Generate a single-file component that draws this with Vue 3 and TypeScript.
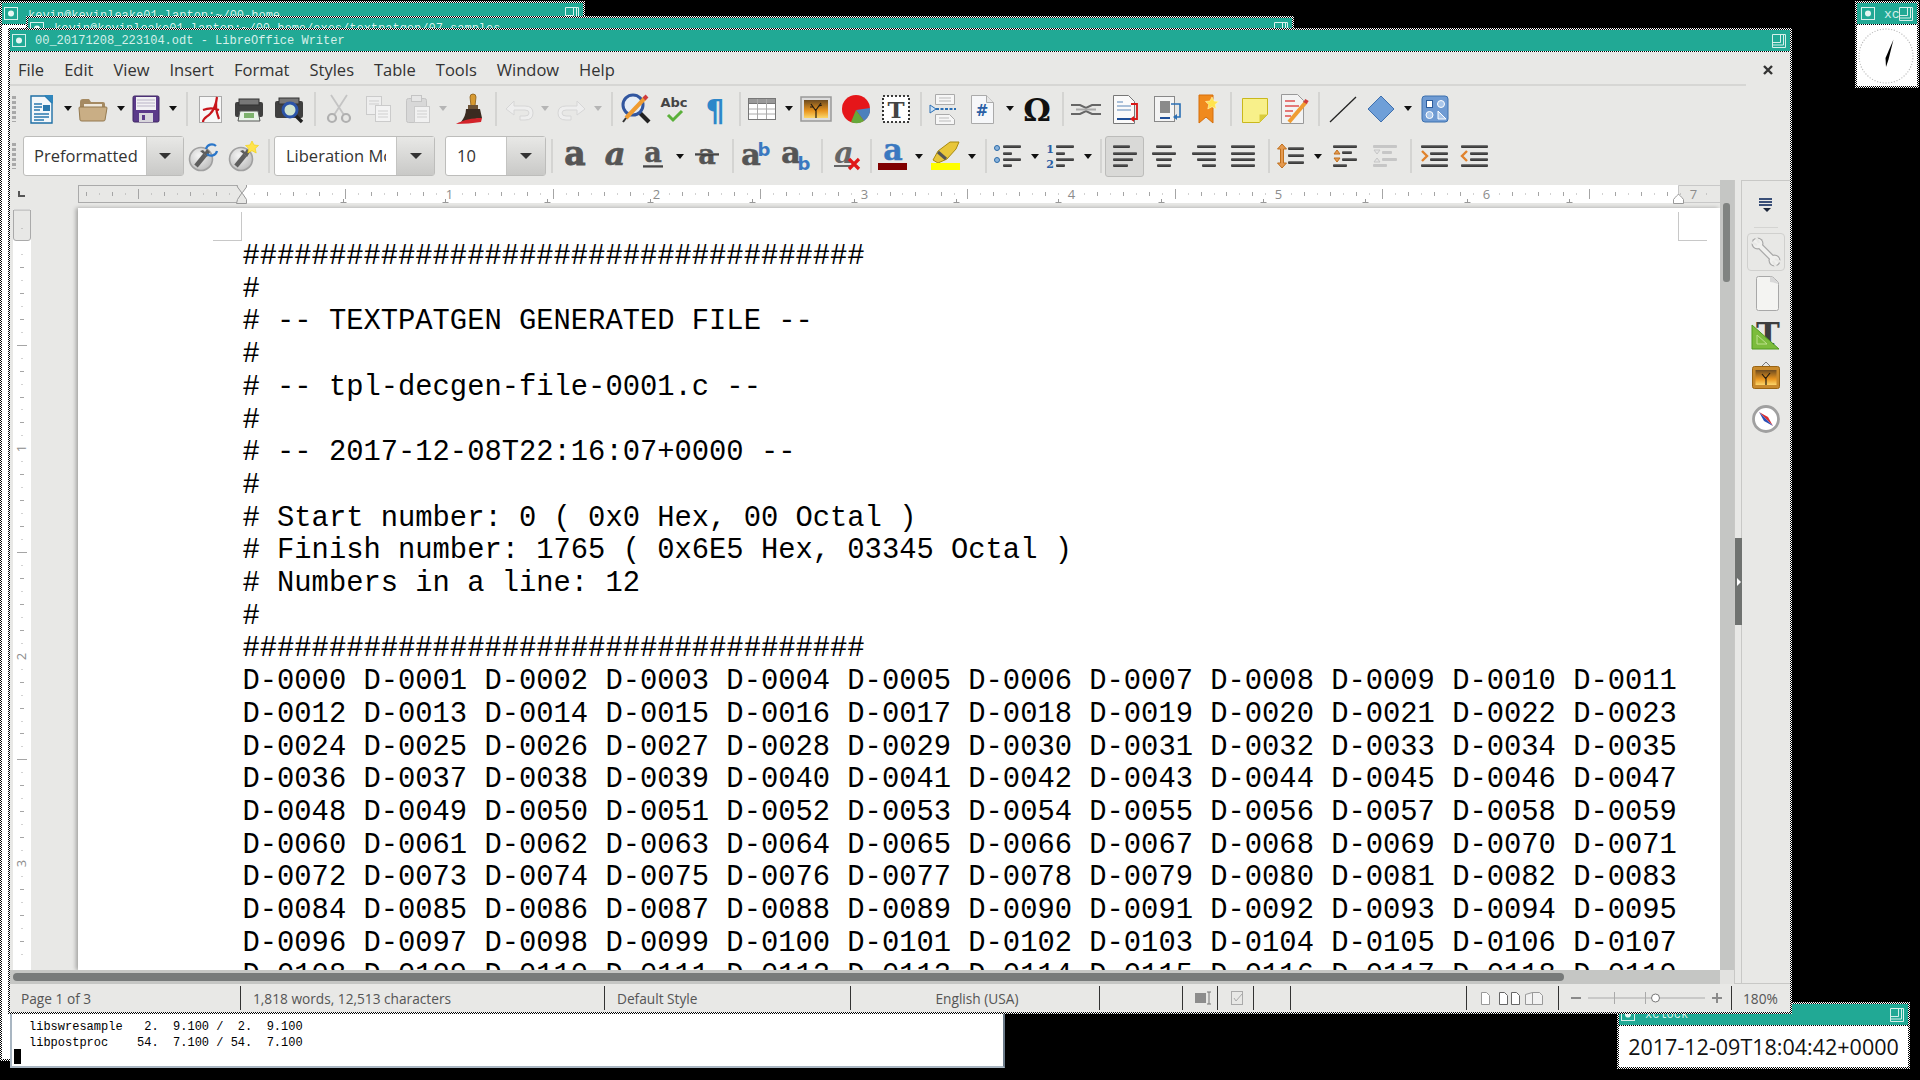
<template>
  <div class="desk">
    <svg class="defs" width="0" height="0">
      <defs>
        <linearGradient id="bar" x1="0" y1="0" x2="0" y2="1"><stop offset="0" stop-color="#8a8a8a" /><stop offset="0.5" stop-color="#4a4a4a" /><stop offset="1" stop-color="#333" /></linearGradient>
        <linearGradient id="sun" x1="0" y1="0" x2="0" y2="1"><stop offset="0" stop-color="#6b4a20" /><stop offset="0.6" stop-color="#e8941e" /><stop offset="1" stop-color="#fbd66a" /></linearGradient>
        <radialGradient id="disc" cx="0.4" cy="0.35" r="0.8"><stop offset="0" stop-color="#f4f4f4" /><stop offset="1" stop-color="#b4b4b4" /></radialGradient>
        <symbol id="ti" viewBox="0 0 14 13"><rect x="0.5" y="0.5" width="13" height="12" fill="none" stroke="#d6f0ea" /><circle cx="7" cy="6.5" r="3" fill="#e6f6f2" /></symbol>
        <symbol id="tm" viewBox="0 0 14 14"><path d="M0.5 0.5h13v13h-13zM8.5 0.5v8h-8M0.5 11h11V0.5" fill="none" stroke="#d6f0ea" /></symbol>
        <symbol id="new" viewBox="0 0 36 36"><path d="M8 5h14l7 7v20H8z" fill="#f3f7fa" stroke="#1f6fa5" stroke-width="1.4" /><path d="M21 4h9v9z" fill="#2f86bd" /><path d="M11 13h8M11 16h8M11 19h6M11 23h15M11 26h15M11 29h10" stroke="#2a78ad" stroke-width="1.3" /><rect x="20" y="14" width="7" height="6" fill="#2a78ad" /></symbol>
        <symbol id="open" viewBox="0 0 36 36"><path d="M5 11q0-3 3-3h6l2 3h12q2 0 2 2v3H5z" fill="#a58a62" /><path d="M9 13h18v6H9z" fill="#efe9dd" /><path d="M4 17q0-1 1-1h26q1 0 1 1l-2 12q0 1-2 1H7q-2 0-2-1z" fill="#c9ae85" stroke="#94794f" /></symbol>
        <symbol id="save" viewBox="0 0 36 36"><rect x="5" y="5" width="26" height="26" rx="1.5" fill="#5b3a8a" stroke="#3f2663" /><rect x="8" y="6" width="20" height="13" fill="#f1f0f3" /><path d="M9 9h18M9 12h18M9 15h18" stroke="#b9b3c6" /><rect x="11" y="22" width="14" height="9" fill="#d8d6dc" /><rect x="14" y="24" width="3" height="5" fill="#5b3a8a" /></symbol>
        <symbol id="pdf" viewBox="0 0 36 36"><rect x="7.5" y="5.5" width="22" height="26" fill="#f7f7f7" stroke="#aaa" /><path d="M25 6c-1 8-3 13-7 17-3 3-7 4-7 8M25 6c-2 9-1 14 2 22M11 19c5-2 11-2 16 0" stroke="#c8141a" stroke-width="2.2" fill="none" /></symbol>
        <symbol id="print" viewBox="0 0 36 36"><path d="M6 11h24q2 0 2 2v11q0 2-2 2H6q-2 0-2-2V13q0-2 2-2z" fill="#3f3f3f" /><rect x="8" y="8" width="20" height="6" fill="#777" stroke="#333" /><path d="M9 20h18l2 10H7z" fill="#e8f3e8" stroke="#555" /><rect x="13" y="22" width="10" height="5" fill="#7cb36c" /></symbol>
        <symbol id="prev" viewBox="0 0 36 36"><path d="M6 10h24q2 0 2 2v13q0 2-2 2H6q-2 0-2-2V12q0-2 2-2z" fill="#3f3f3f" /><rect x="8" y="7" width="20" height="6" fill="#777" stroke="#333" /><path d="M24 24l7 7" stroke="#222" stroke-width="3.4" /><circle cx="19" cy="19" r="7" fill="#cfe3d0" stroke="#2b54a8" stroke-width="3" /></symbol>
        <symbol id="cut" viewBox="0 0 36 36"><path d="M10 4l13 20M26 4L13 24" stroke="#c4c4c4" stroke-width="1.8" /><circle cx="11" cy="27" r="4" fill="none" stroke="#b0b0b0" stroke-width="2.2" /><circle cx="25" cy="27" r="4" fill="none" stroke="#b0b0b0" stroke-width="2.2" /></symbol>
        <symbol id="copy" viewBox="0 0 36 36"><rect x="6.500" y="5.500" width="15" height="18" fill="#eee" stroke="#cbcbcb" /><rect x="15.500" y="14.500" width="15" height="16" fill="#f3f3f3" stroke="#cbcbcb" /><path d="M9 10h10M9 13h10M18 20h10M18 23h10M18 26h10" stroke="#cfcfcf" /></symbol>
        <symbol id="paste" viewBox="0 0 36 36"><rect x="7.500" y="7.500" width="20" height="24" rx="2" fill="#d8d8d8" stroke="#c4c4c4" /><rect x="12.500" y="4.500" width="10" height="6" fill="#e6e6e6" stroke="#c4c4c4" /><rect x="15.500" y="15.500" width="15" height="16" fill="#f1f1f1" stroke="#cbcbcb" /><path d="M18 20h10M18 23h10M18 26h10" stroke="#cfcfcf" /></symbol>
        <symbol id="brush" viewBox="0 0 36 36"><path d="M20 3q3 0 3 3l-1 9h-4l-1-9q0-3 3-3z" fill="#d79a32" stroke="#8a5c14" stroke-width="0.8" /><rect x="15" y="14" width="10" height="4" fill="#6b5236" /><path d="M13 18h14l2 9c-7 1-14 2-21 4 3-4 5-8 5-13z" fill="#3a2a20" /><path d="M3 33c7-4 16-6 26-6l-1 4c-8 1-17 2-25 2z" fill="#d3232a" /></symbol>
        <symbol id="undo" viewBox="0 0 36 36"><path d="M4 18l8-8v5h11q8 0 8 7t-8 7h-5v-4h5q4 0 4-3t-4-3H12v5z" fill="#eee" stroke="#d6d6d6" /></symbol>
        <symbol id="redo" viewBox="0 0 36 36"><path transform="matrix(-1 0 0 1 36 0)" d="M4 18l8-8v5h11q8 0 8 7t-8 7h-5v-4h5q4 0 4-3t-4-3H12v5z" fill="#eee" stroke="#d6d6d6" /></symbol>
        <symbol id="find" viewBox="0 0 36 36"><path d="M23 22l9 9" stroke="#222" stroke-width="4.2" /><circle cx="16" cy="14" r="10" fill="#e6edf6" stroke="#31569f" stroke-width="3" /><path d="M9 27L28 7" stroke="#ef9c32" stroke-width="4" /><path d="M27 8l3-3" stroke="#d03c3c" stroke-width="4" /><path d="M9 27l-3 4" stroke="#333" stroke-width="2" /></symbol>
        <symbol id="abc" viewBox="0 0 36 36"><text x="18" y="16" text-anchor="middle" font-family="DejaVu Sans" font-weight="700" font-size="13" fill="#444">Abc</text><path d="M12 24l5 5 9-9" stroke="#5ab03a" stroke-width="3" fill="none" /></symbol>
        <symbol id="pil" viewBox="0 0 36 36"><text x="18" y="30" text-anchor="middle" font-family="DejaVu Sans" font-weight="700" font-size="30" fill="#2d87c9">¶</text></symbol>
        <symbol id="table" viewBox="0 0 36 36"><rect x="4.500" y="7.500" width="27" height="21" fill="#fff" stroke="#777" /><rect x="4.500" y="7.500" width="27" height="5" fill="#999" stroke="#777" /><path d="M13.500 8v20M22.500 8v20M5 18h26M5 23h26" stroke="#aaa" /></symbol>
        <symbol id="image" viewBox="0 0 36 36"><rect x="3" y="6" width="30" height="24" fill="#ddd" stroke="#999" stroke-width="1.500" /><rect x="6" y="9" width="24" height="18" fill="url(#sun)" /><path d="M18 27v-9M18 20l-5-7M18 19l5-7M15 16l-3 0M21 15l3-1" stroke="#221a10" stroke-width="1.200" fill="none" /></symbol>
        <symbol id="chart" viewBox="0 0 36 36"><circle cx="18" cy="18" r="14" fill="#e5161a" /><path d="M18 19L32 17A14 14 0 0 1 26 30z" fill="#4c80bd" /><path d="M18 19L26 30A14 14 0 0 1 13 31z" fill="#66a83a" /></symbol>
        <symbol id="tbox" viewBox="0 0 36 36"><rect x="5" y="5" width="26" height="26" fill="#fff" stroke="#000" stroke-width="1.600" stroke-dasharray="2 2" /><text x="18" y="27" text-anchor="middle" font-family="DejaVu Serif" font-weight="700" font-size="23" fill="#444">T</text></symbol>
        <symbol id="brk" viewBox="0 0 36 36"><path d="M9.500 3.500h19v10h-19z" fill="#f6f6f6" stroke="#aaa" /><path d="M13 7h12M13 10h12" stroke="#bbb" /><path d="M10 18h20" stroke="#2a6fb5" stroke-width="2" stroke-dasharray="3 1.500" /><path d="M4 14v8l6-4z" fill="#cfe3f5" stroke="#2a6fb5" /><path d="M9.500 23.500h14l5 5v5h-19z" fill="#f6f6f6" stroke="#aaa" /><path d="M13 27h10M13 30h12" stroke="#bbb" /></symbol>
        <symbol id="field" viewBox="0 0 36 36"><path d="M7.500 4.500h15l7 7v21h-22z" fill="#f6f7f9" stroke="#aaa" /><path d="M22.500 4.500v7h7" fill="#e6e6e6" stroke="#aaa" /><text x="18" y="25" text-anchor="middle" font-family="DejaVu Sans" font-weight="700" font-size="15" fill="#2a5fa5">#</text></symbol>
        <symbol id="omega" viewBox="0 0 36 36"><text x="18" y="30" text-anchor="middle" font-family="DejaVu Serif" font-weight="700" font-size="31" fill="#111">Ω</text></symbol>
        <symbol id="link" viewBox="0 0 36 36"><path d="M3 14h9l6 3 6-3h9M3 23h9l6-3 6 3h9" stroke="#666" stroke-width="2" fill="none" /><path d="M8 18.500h20" stroke="#aaa" stroke-width="2" /></symbol>
        <symbol id="foot" viewBox="0 0 36 36"><path d="M7.500 4.500h15l6 6v22h-21z" fill="#fafafa" stroke="#777" /><path d="M11 11h6M11 15h14M11 19h14" stroke="#5a86b8" /><path d="M11 28h14" stroke="#1f4f98" stroke-width="2" /><path d="M25 13h6v15h-4" stroke="#d81818" stroke-width="1.800" fill="none" /><path d="M28 25v6l-4-3z" fill="#d81818" /></symbol>
        <symbol id="end" viewBox="0 0 36 36"><rect x="6.500" y="5.500" width="20" height="25" fill="#f4f4f4" stroke="#888" /><rect x="12" y="10" width="10" height="12" fill="#8a8a8a" /><path d="M12 27h10" stroke="#1f4f98" stroke-width="2" /><path d="M23 13h9v13h-4" stroke="#2a6fb5" stroke-width="1.600" fill="none" /><path d="M29 23v6l-4-3z" fill="#2a6fb5" /></symbol>
        <symbol id="bmk" viewBox="0 0 36 36"><path d="M10 4h14v28l-7-6-7 6z" fill="#f08a1d" stroke="#d56f0d" /><path d="M23 6l2 4 4.500.500-3.300 3 1 4.500-4.200-2.300-4.200 2.300 1-4.500-3.300-3 4.500-.500z" fill="#ffe34d" stroke="#fff6c0" stroke-width="0.600" /></symbol>
        <symbol id="note" viewBox="0 0 36 36"><path d="M6.500 7.500h25v16l-8 8h-17z" fill="#f8f08a" stroke="#c9b81c" /><path d="M31.500 23.500h-8v8z" fill="#d9cb3c" /></symbol>
        <symbol id="track" viewBox="0 0 36 36"><path d="M6.500 3.500h16l6 6v23h-22z" fill="#f3f3f3" stroke="#999" /><path d="M10 10h10M10 15h14M10 20h8M10 25h6" stroke="#e05050" stroke-width="1.400" /><path d="M14 31L31 11" stroke="#ef9c32" stroke-width="4" /><path d="M30 12l2-3" stroke="#d03c3c" stroke-width="4" /></symbol>
        <symbol id="line" viewBox="0 0 36 36"><path d="M5 31L31 6" stroke="#222" stroke-width="1.300" /></symbol>
        <symbol id="diamond" viewBox="0 0 36 36"><path d="M18 5L31 18 18 31 5 18z" fill="#6f9fd8" stroke="#3f70ae" /></symbol>
        <symbol id="shapes" viewBox="0 0 36 36"><rect x="5" y="5" width="26" height="26" rx="3" fill="#6f9bd3" stroke="#3d70ae" /><rect x="9.500" y="9.500" width="6" height="7" fill="#fff" stroke="#2c5c9c" /><circle cx="24" cy="13" r="3.500" fill="#a9c6ea" stroke="#fff" /><ellipse cx="12.500" cy="24" rx="3.500" ry="3.500" fill="#a9c6ea" stroke="#fff" /><path d="M21 20v8h8z" fill="#a9c6ea" stroke="#fff" /></symbol>
        <symbol id="stya" viewBox="0 0 36 36"><circle cx="15" cy="21" r="11.500" fill="url(#disc)" stroke="#a0a0a0" stroke-width="1.600" /><path d="M10 28l9-11" stroke="#5e5e5e" stroke-width="4.500" /><path d="M14 13l7 6 3-5-3-3-2 3-2-2z" fill="#5e5e5e" /><path d="M20 11a6 6 0 0 1 10-3M31 13a6 6 0 0 1-10 3" stroke="#2a76c9" stroke-width="2.200" fill="none" /></symbol>
        <symbol id="styb" viewBox="0 0 36 36"><circle cx="15" cy="21" r="11.500" fill="url(#disc)" stroke="#a0a0a0" stroke-width="1.600" /><path d="M10 28l9-11" stroke="#5e5e5e" stroke-width="4.500" /><path d="M14 13l7 6 3-5-3-3-2 3-2-2z" fill="#5e5e5e" /><path d="M26 3l2 4 4.500.500-3.300 3 1 4.500-4.200-2.300-4.200 2.300 1-4.500-3.300-3 4.500-.500z" fill="#ffe34d" stroke="#f4d000" stroke-width="0.600" /></symbol>
        <symbol id="bold" viewBox="0 0 36 36"><text x="18" y="27" text-anchor="middle" font-family="DejaVu Serif" font-weight="700" font-size="33" fill="#555" stroke="#555" stroke-width="0.900">a</text></symbol>
        <symbol id="ital" viewBox="0 0 36 36"><text x="18" y="27" text-anchor="middle" font-family="DejaVu Serif" font-weight="700" font-style="italic" font-size="32" fill="#555" stroke="#555" stroke-width="0.700">a</text></symbol>
        <symbol id="undl" viewBox="0 0 36 36"><text x="18" y="24" text-anchor="middle" font-family="DejaVu Serif" font-weight="700" font-size="27" fill="#555" stroke="#555" stroke-width="0.500">a</text><rect x="8" y="27" width="20" height="2.500" fill="url(#bar)" /></symbol>
        <symbol id="strk" viewBox="0 0 36 36"><text x="18" y="26" text-anchor="middle" font-family="DejaVu Serif" font-weight="700" font-size="27" fill="#555" stroke="#555" stroke-width="0.500">a</text><rect x="6" y="15" width="24" height="2.500" fill="url(#bar)" /></symbol>
        <symbol id="sup" viewBox="0 0 36 36"><text x="14" y="27" text-anchor="middle" font-family="DejaVu Serif" font-weight="700" font-size="30" fill="#555" stroke="#555" stroke-width="0.700">a</text><text x="27" y="18" text-anchor="middle" font-family="DejaVu Sans" font-weight="700" font-size="18" fill="#3a78c0">b</text></symbol>
        <symbol id="sub" viewBox="0 0 36 36"><text x="14" y="25" text-anchor="middle" font-family="DejaVu Serif" font-weight="700" font-size="30" fill="#555" stroke="#555" stroke-width="0.700">a</text><text x="27" y="32" text-anchor="middle" font-family="DejaVu Sans" font-weight="700" font-size="18" fill="#3a78c0">b</text></symbol>
        <symbol id="clr" viewBox="0 0 36 36"><text x="15" y="25" text-anchor="middle" font-family="DejaVu Serif" font-weight="700" font-style="italic" font-size="30" fill="#666">a</text><rect x="5" y="27" width="18" height="2" fill="#666" /><path d="M20 21l10 10M30 21L20 31" stroke="#e01818" stroke-width="3.200" /></symbol>
        <symbol id="fcol" viewBox="0 0 36 36"><text x="18" y="22" text-anchor="middle" font-family="DejaVu Serif" font-weight="700" font-size="30" fill="#3a78c0" stroke="#3a78c0" stroke-width="0.500">a</text><rect x="3" y="25" width="29" height="7" fill="#800000" /></symbol>
        <symbol id="hlit" viewBox="0 0 36 36"><path d="M5 22l5-9L22 4h9l-3 7-9 10-9 4z" fill="#e8c63a" stroke="#a88a10" /><path d="M10 14l8 7" stroke="#555" stroke-width="3" /><rect x="3" y="25" width="29" height="7" fill="#ffff00" /></symbol>
        <symbol id="bul" viewBox="0 0 36 36"><circle cx="8" cy="10" r="2.500" fill="#8ab3dc" stroke="#2a6aa8" /><circle cx="8" cy="22" r="2.500" fill="#8ab3dc" stroke="#2a6aa8" /><rect x="14" y="7" width="18" height="3" rx="1" fill="url(#bar)" /><rect x="14" y="14" width="9" height="3" rx="1" fill="url(#bar)" /><rect x="14" y="20" width="18" height="3" rx="1" fill="url(#bar)" /><rect x="14" y="26" width="9" height="3" rx="1" fill="url(#bar)" /></symbol>
        <symbol id="num" viewBox="0 0 36 36"><text x="8" y="15" text-anchor="middle" font-family="DejaVu Serif" font-weight="700" font-size="11" fill="#2a5fa5">1</text><text x="8" y="30" text-anchor="middle" font-family="DejaVu Serif" font-weight="700" font-size="11" fill="#2a5fa5">2</text><rect x="14" y="7" width="18" height="3" rx="1" fill="url(#bar)" /><rect x="14" y="14" width="9" height="3" rx="1" fill="url(#bar)" /><rect x="14" y="20" width="18" height="3" rx="1" fill="url(#bar)" /><rect x="14" y="26" width="9" height="3" rx="1" fill="url(#bar)" /></symbol>
        <symbol id="alnl" viewBox="0 0 36 36"><rect x="6" y="7" width="17" height="3" rx="1" fill="url(#bar)" /><rect x="6" y="14" width="24" height="3" rx="1" fill="url(#bar)" /><rect x="6" y="20" width="20" height="3" rx="1" fill="url(#bar)" /><rect x="6" y="26" width="15" height="3" rx="1" fill="url(#bar)" /></symbol>
        <symbol id="alnc" viewBox="0 0 36 36"><rect x="10" y="7" width="16" height="3" rx="1" fill="url(#bar)" /><rect x="6" y="14" width="24" height="3" rx="1" fill="url(#bar)" /><rect x="10" y="20" width="16" height="3" rx="1" fill="url(#bar)" /><rect x="11" y="26" width="14" height="3" rx="1" fill="url(#bar)" /></symbol>
        <symbol id="alnr" viewBox="0 0 36 36"><rect x="11" y="7" width="19" height="3" rx="1" fill="url(#bar)" /><rect x="6" y="14" width="24" height="3" rx="1" fill="url(#bar)" /><rect x="11" y="20" width="19" height="3" rx="1" fill="url(#bar)" /><rect x="16" y="26" width="14" height="3" rx="1" fill="url(#bar)" /></symbol>
        <symbol id="alnj" viewBox="0 0 36 36"><rect x="6" y="7" width="24" height="3" rx="1" fill="url(#bar)" /><rect x="6" y="14" width="24" height="3" rx="1" fill="url(#bar)" /><rect x="6" y="20" width="24" height="3" rx="1" fill="url(#bar)" /><rect x="6" y="26" width="24" height="3" rx="1" fill="url(#bar)" /></symbol>
        <symbol id="spc" viewBox="0 0 36 36"><path d="M9 6l4.500 5h-3v14h3L9 30l-4.500-5h3V11h-3z" fill="#e59a50" stroke="#c06f1c" /><rect x="15" y="9" width="16" height="3" rx="1" fill="url(#bar)" /><rect x="15" y="16" width="16" height="3" rx="1" fill="url(#bar)" /><rect x="15" y="23" width="16" height="3" rx="1" fill="url(#bar)" /></symbol>
        <symbol id="inc" viewBox="0 0 36 36"><rect x="6" y="7" width="24" height="3" rx="1" fill="url(#bar)" /><rect x="15" y="13" width="10" height="3" rx="1" fill="url(#bar)" /><rect x="15" y="20" width="15" height="3" rx="1" fill="url(#bar)" /><rect x="6" y="26" width="14" height="3" rx="1" fill="url(#bar)" /><path d="M10 12l3 4H7zM10 24l3-4H7z" fill="#e59a50" stroke="#c06f1c" /></symbol>
        <symbol id="dec" viewBox="0 0 36 36"><rect x="6" y="7" width="24" height="3" rx="1" fill="#c6c6c6" /><rect x="15" y="13" width="10" height="3" rx="1" fill="#c6c6c6" /><rect x="15" y="20" width="15" height="3" rx="1" fill="#c6c6c6" /><rect x="6" y="26" width="14" height="3" rx="1" fill="#c6c6c6" /><path d="M7 12h6l-3 4zM7 24h6l-3-4z" fill="#e4e4e4" stroke="#c6c6c6" /></symbol>
        <symbol id="ind" viewBox="0 0 36 36"><rect x="5" y="7" width="27" height="3" rx="1" fill="url(#bar)" /><rect x="14" y="14" width="18" height="3" rx="1" fill="url(#bar)" /><rect x="14" y="20" width="18" height="3" rx="1" fill="url(#bar)" /><rect x="5" y="26" width="27" height="3" rx="1" fill="url(#bar)" /><path d="M6 13l5 5-5 5" stroke="#e0822c" stroke-width="2.400" fill="none" /></symbol>
        <symbol id="oud" viewBox="0 0 36 36"><rect x="5" y="7" width="27" height="3" rx="1" fill="url(#bar)" /><rect x="14" y="14" width="18" height="3" rx="1" fill="url(#bar)" /><rect x="14" y="20" width="18" height="3" rx="1" fill="url(#bar)" /><rect x="5" y="26" width="27" height="3" rx="1" fill="url(#bar)" /><path d="M11 13l-5 5 5 5" stroke="#e0822c" stroke-width="2.400" fill="none" /></symbol>
      </defs>
    </svg>

    <div class="win w1">
      <div class="tbar">
        <svg class="ticon"><use href="#ti" /></svg>
        <span class="ttext">kevin@kevinleake01-laptop:~/00-home</span>
        <svg class="tmax"><use href="#tm" /></svg>
      </div>
      <div class="wbody"></div>
    </div>

    <div class="win w2">
      <div class="tbar">
        <svg class="ticon"><use href="#ti" /></svg>
        <span class="ttext">kevin@kevinleake01-laptop:~/00-home/exes/textpatgen/07-samples</span>
        <svg class="tmax"><use href="#tm" /></svg>
      </div>
      <div class="wbody"></div>
    </div>

    <div class="term">
      <pre class="termtxt">libswresample   2.  9.100 /  2.  9.100
libpostproc    54.  7.100 / 54.  7.100</pre>
      <div class="cursor"></div>
    </div>

    <div class="win wdate">
      <div class="tbar">
        <svg class="ticon"><use href="#ti" /></svg>
        <span class="ttext">xclock</span>
        <svg class="tmax"><use href="#tm" /></svg>
      </div>
      <div class="datebody">2017-12-09T18:04:42+0000</div>
    </div>

    <div class="win wclock">
      <div class="tbar">
        <svg class="ticon"><use href="#ti" /></svg>
        <span class="ttext">xc</span>
        <svg class="tmax"><use href="#tm" /></svg>
      </div>
      <div class="clockbody">
        <svg width="60" height="62" viewBox="0 0 60 62">
          <circle v-for="(d, i) in clockDots" :key="i" :cx="d.x" :cy="d.y" r="0.7" fill="#bdbdbd" />
          <path d="M36.500 14.500L31.500 34.500 29 42 28.500 33z" fill="#000" />
        </svg>
      </div>
    </div>

    <div class="win writer">
      <div class="tbar">
        <svg class="ticon"><use href="#ti" /></svg>
        <span class="ttext">00_20171208_223104.odt - LibreOffice Writer</span>
        <svg class="tmax"><use href="#tm" /></svg>
      </div>

      <div class="menubar">
        <span v-for="m in menus" :key="m" class="mitem">{{ m }}</span>
        <svg class="mclose" width="12" height="12" viewBox="0 0 12 12"><path d="M2 2l8 8M10 2l-8 8" stroke="#333" stroke-width="2.400" /></svg>
      </div>

      <div v-for="(row, r) in rows" :key="r" class="toolbar" :class="'tb' + r">
        <div
          v-for="(it, i) in row"
          :key="i"
          class="item"
          :class="'k-' + it.k"
          :style="{ width: it.w + 'px', marginLeft: it.ml + 'px' }"
        >
          <div v-if="it.k === 'combo'" class="combo">
            <span class="ctext">{{ it.label }}</span>
            <span class="cbtn" :style="{ width: it.btn + 'px' }"><i class="tri big"></i></span>
          </div>
          <i v-else-if="it.k === 'dd'" class="tri"></i>
          <i v-else-if="it.k === 'ddg'" class="tri off"></i>
          <svg v-else-if="it.k !== 'sep' && it.k !== 'grip'" class="ic"><use :href="'#' + it.k" /></svg>
        </div>
      </div>

      <div class="workspace">
        <div class="edit">
          <div class="rulerrow">
            <div class="rcorner"><i></i></div>
            <svg class="hruler" width="1642" height="19" viewBox="0 0 1642 19">
              <rect x="0.500" y="0.500" width="163" height="17" fill="#e8e8e6" stroke="#aaa" />
              <rect x="164" y="0" width="1436" height="18" fill="#fff" />
              <path d="M1600.500 18V0.500H1642M1600 17.500H1642" fill="none" stroke="#c8c8c8" />
              <template v-for="t in hTicks" :key="t.x">
                <text v-if="t.n" :x="t.x" y="14" text-anchor="middle" class="rnum">{{ t.n }}</text>
                <path v-else :d="`M${t.x} ${9 - t.h}V${9 + t.h}`" stroke="#a5a5a5" />
              </template>
              <path v-for="x in tabs" :key="x" :d="`M${x - 3} 17.500h6M${x} 14v3`" stroke="#999" fill="none" />
              <path d="M158.500 -2h10v4l-4 5.500-1 0-4-5.500zM158.500 18.500h10v-4l-4-6-1 0-4 6z" fill="#e8e8e6" stroke="#999" />
              <path d="M1595.500 18.500v-4q4-5 5-5t5 5v4z" fill="#fff" stroke="#999" />
            </svg>
          </div>
          <div class="docrow">
            <div class="vcol">
              <svg width="18" height="762" viewBox="0 0 18 762">
                <rect x="0" y="0" width="18" height="762" fill="#fff" />
                <path d="M0.500 1v28q0 2.500 2.500 2.500h12q2.500 0 2.500-2.500V1z" fill="#e8e8e6" stroke="#aaa" />
                <template v-for="t in vTicks" :key="t.y">
                  <text v-if="t.n" x="0" y="0" text-anchor="middle" class="rnum" :transform="`translate(13 ${t.y}) rotate(-90)`">{{ t.n }}</text>
                  <path v-else :d="`M${9 - t.h} ${t.y}H${9 + t.h}`" stroke="#a5a5a5" />
                </template>
              </svg>
            </div>
            <div class="page">
              <i class="mark tl"></i>
              <i class="mark tr"></i>
              <div class="doc">
                <div v-for="(l, i) in lines" :key="i" class="dline">{{ l }}</div>
              </div>
            </div>
          </div>
          <div class="hscroll"><div class="hthumb"></div></div>
        </div>

        <div class="vscroll"><div class="vthumb"></div><div class="vcorner"></div></div>

        <div class="sidegap"><div class="sidegrip"></div></div>

        <div class="sidebar">
          <svg class="sideic menuic" width="20" height="20" viewBox="0 0 20 20"><path d="M3 5h13M3 8h13M3 11h13" stroke="#3a4f78" stroke-width="1.800" /><path d="M7 14h8l-4 4z" fill="#1a2438" /></svg>
          <div class="sidesep"></div>
          <div class="sidebtn">
            <svg width="32" height="32" viewBox="0 0 32 32">
              <path d="M8 8L24 24" stroke="#a8a8a8" stroke-width="6.500" />
              <circle cx="7.500" cy="7.500" r="6" fill="#a8a8a8" /><circle cx="24.500" cy="24.500" r="6" fill="#a8a8a8" />
              <path d="M8 8L24 24" stroke="#f0f0ee" stroke-width="4" />
              <circle cx="7.500" cy="7.500" r="4.800" fill="#f0f0ee" /><circle cx="24.500" cy="24.500" r="4.800" fill="#f0f0ee" />
              <path d="M1 6L7 9M6 1l3 6M31 26l-6-3M26 31l-3-6" stroke="#e8e8e6" stroke-width="2.400" />
            </svg>
          </div>
          <svg class="sideic pageic" width="32" height="42" viewBox="0 0 32 42"><path d="M6.500 7.500q0-2 2-2h12q2 0 4 2l3 3q1 1 1 3v24q0 2-2 2h-18q-2 0-2-2z" fill="#f4f4f2" stroke="#a8a8a8" /><path d="M20 6q5 0 8 7-5-2-8-2z" fill="#d8d8d8" /></svg>
          <svg class="sideic" width="32" height="42" viewBox="0 0 32 42">
            <text x="18" y="32" text-anchor="middle" font-family="DejaVu Serif" font-weight="700" font-size="32" fill="#3d3d3d">T</text>
            <path d="M2 12v24h27z" fill="#7cbc3c" stroke="#4e9a1e" /><path d="M7 22v9h10z" fill="none" stroke="#bde08c" />
          </svg>
          <svg class="sideic" width="32" height="40" viewBox="0 0 32 40"><path d="M11 12l5-5 5 5" fill="none" stroke="#777" /><rect x="2.500" y="11.500" width="27" height="22" rx="2" fill="#c98a2c" stroke="#9a6412" /><rect x="5.500" y="15" width="21" height="15" fill="url(#sun)" /><path d="M16 30v-8M16 24l-4-5M16 23l4-5" stroke="#221a10" stroke-width="1.200" /></svg>
          <svg class="sideic compass" width="32" height="44" viewBox="0 0 32 44"><circle cx="16" cy="22" r="12.500" fill="#fff" stroke="#a0a0a0" stroke-width="2.800" /><path d="M9 15L23 29 18 20z" fill="#dc3030" /><path d="M9 15L23 29 14 24z" fill="#2a4fb5" /></svg>
        </div>
      </div>

      <div class="status">
        <div v-for="(s, i) in statusCells" :key="i" class="cell" :class="s.cls" :style="{ width: s.w + 'px' }">
          {{ s.t }}
          <svg v-if="s.cls === 'c-sel'" width="18" height="14" viewBox="0 0 18 14"><rect x="1" y="2" width="11" height="10" fill="#8c8c8c" /><path d="M15 1v12M13 1h4M13 13h4" stroke="#777" /></svg>
          <svg v-if="s.cls === 'c-doc'" width="16" height="16" viewBox="0 0 16 16"><rect x="2.500" y="1.500" width="11" height="13" fill="none" stroke="#aaa" /><path d="M5 8l2 3 6-7" stroke="#aaa" fill="none" /></svg>
          <svg v-if="s.cls === 'c-layout'" width="76" height="16" viewBox="0 0 76 16">
            <path d="M6.500 2.500h5l3 3v9h-8z" fill="#fff" stroke="#999" />
            <path d="M24.500 2.500h5l3 3v9h-8zM36.500 2.500h5l3 3v9h-8z" fill="#fff" stroke="#666" />
            <path d="M50.500 4.500l7-2v12h-7zM57.500 2.500h7l3 3v9h-10z" fill="#f2f2f2" stroke="#999" />
          </svg>
          <svg v-if="s.cls === 'c-zoom'" width="172" height="16" viewBox="0 0 172 16">
            <path d="M12 8h10" stroke="#8a8a8a" stroke-width="2" />
            <path d="M29 8h117M55.500 2v12M86.500 2v12" stroke="#aaa" />
            <circle cx="96.500" cy="8" r="4" fill="#fff" stroke="#777" />
            <path d="M153 8h10M158 3v10" stroke="#8a8a8a" stroke-width="2" />
          </svg>
        </div>
      </div>
    </div>
  </div>
</template>

<script setup lang="ts">
type Item = { k: string; w: number; ml: number; label?: string; btn?: number }
type Spec = [string, number, string?, number?, number?]

const menus = ['File', 'Edit', 'View', 'Insert', 'Format', 'Styles', 'Table', 'Tools', 'Window', 'Help']

const widths: Record<string, number> = { dd: 12, ddg: 12, sep: 2, grip: 4, alnl: 39 }

// each entry is [icon, centre x in the window]; gaps are worked out from the centres
const place = (specs: Spec[]): Item[] => {
  let end = 10
  return specs.map(([k, c, label, w, btn]) => {
    const width = w ?? widths[k] ?? 36
    const left = c - width / 2
    const it: Item = { k, w: width, ml: left - end, label, btn }
    end = left + width
    return it
  })
}

const rows: Item[][] = [
  place([
    ['grip', 14], ['new', 41], ['dd', 68], ['open', 93], ['dd', 121], ['save', 146], ['dd', 173], ['sep', 187],
    ['pdf', 210], ['print', 249], ['prev', 289], ['sep', 315], ['cut', 339], ['copy', 378], ['paste', 417], ['ddg', 443],
    ['brush', 471], ['sep', 496], ['undo', 520], ['ddg', 545], ['redo', 571], ['ddg', 598], ['sep', 612],
    ['find', 635], ['abc', 674], ['pil', 715], ['sep', 740], ['table', 762], ['dd', 789], ['image', 816],
    ['chart', 856], ['tbox', 896], ['sep', 921], ['brk', 944], ['field', 982], ['dd', 1010], ['omega', 1037],
    ['sep', 1063], ['link', 1086], ['foot', 1124], ['end', 1166], ['bmk', 1207], ['sep', 1231], ['note', 1254],
    ['track', 1293], ['sep', 1319], ['line', 1343], ['diamond', 1381], ['dd', 1408], ['shapes', 1435],
  ]),
  place([
    ['grip', 14], ['combo', 103.5, 'Preformatted', 161, 36], ['stya', 204], ['styb', 244], ['sep', 269],
    ['combo', 354.5, 'Liberation Mono', 161, 37], ['combo', 495.5, '10', 101, 38], ['sep', 552],
    ['bold', 575], ['ital', 615], ['undl', 653], ['dd', 680], ['strk', 707], ['sep', 733], ['sup', 755], ['sub', 795],
    ['sep', 822], ['clr', 847], ['sep', 871], ['fcol', 893], ['dd', 919], ['hlit', 946], ['dd', 972], ['sep', 986],
    ['bul', 1007], ['dd', 1035], ['num', 1060], ['dd', 1088], ['sep', 1101], ['alnl', 1124.5], ['alnc', 1164],
    ['alnr', 1204], ['alnj', 1243], ['sep', 1269], ['spc', 1291], ['dd', 1318], ['inc', 1345], ['dec', 1385],
    ['sep', 1411], ['ind', 1434], ['oud', 1474],
  ]),
]

const tick = (i: number) => (i % 8 === 0 ? 5 : i % 2 === 0 ? 2 : 0.5)

const hTicks: { x: number; h: number; n: number }[] = []
for (let i = -12; i < 116; i++) {
  const x = Math.round(163.5 + i * 12.96) + 0.5
  if (x < 6 || x > 1636 || i === 0) continue
  hTicks.push({ x, h: tick(i), n: i % 16 === 0 ? i / 16 : 0 })
}

const vTicks: { y: number; h: number; n: number }[] = []
for (let i = -1; i < 56; i++) {
  const y = Math.round(32 + i * 12.96) + 0.5
  if (i === 0) continue
  vTicks.push({ y, h: tick(i), n: i % 16 === 0 ? i / 16 : 0 })
}

const tabs: number[] = []
for (let i = 0; i < 13; i++) tabs.push(Math.round(265 + i * 102.2) + 0.5)

const clockDots = Array.from({ length: 60 }, (_, i) => ({
  x: 29 + 27 * Math.sin((i * Math.PI) / 30),
  y: 31 + 27 * Math.cos((i * Math.PI) / 30),
}))

const hashes = '#'.repeat(36)
const lines: string[] = [
  hashes,
  '#',
  '# -- TEXTPATGEN GENERATED FILE --',
  '#',
  '# -- tpl-decgen-file-0001.c --',
  '#',
  '# -- 2017-12-08T22:16:07+0000 --',
  '#',
  '# Start number: 0 ( 0x0 Hex, 00 Octal )',
  '# Finish number: 1765 ( 0x6E5 Hex, 03345 Octal )',
  '# Numbers in a line: 12',
  '#',
  hashes,
]
for (let r = 0; r < 10; r++) {
  const cols: string[] = []
  for (let c = 0; c < 12; c++) cols.push('D-' + String(r * 12 + c).padStart(4, '0'))
  lines.push(cols.join(' '))
}

const statusCells = [
  { t: 'Page 1 of 3', w: 231, cls: 'c-first' },
  { t: '1,818 words, 12,513 characters', w: 364, cls: '' },
  { t: 'Default Style', w: 246, cls: '' },
  { t: 'English (USA)', w: 249, cls: 'c-mid' },
  { t: '', w: 83, cls: '' },
  { t: '', w: 35, cls: 'c-sel' },
  { t: '', w: 36, cls: 'c-doc' },
  { t: '', w: 37, cls: '' },
  { t: '', w: 176, cls: '' },
  { t: '', w: 92, cls: 'c-layout' },
  { t: '', w: 173, cls: 'c-zoom' },
  { t: '180%', w: 58, cls: 'c-pct' },
]
</script>

<style>
html, body {
  margin: 0;
  background: #000;
}
</style>

<style scoped>
.desk {
  position: relative;
  width: 1920px;
  height: 1080px;
  overflow: hidden;
  background: #000;
  font-family: "Open Sans", "Noto Sans", sans-serif;
}
.defs {
  position: absolute;
}
.win {
  position: absolute;
  box-sizing: border-box;
  padding: 2px;
  display: flex;
  flex-direction: column;
  background: repeating-conic-gradient(#000 0 25%, #fff 0 50%) 0 0 / 2px 2px;
}
.w1 {
  left: 0;
  top: 1px;
  width: 585px;
  height: 1060px;
}
.w1 .ttext {
  padding-top: 6px;
}
.w2 {
  left: 26px;
  top: 16px;
  width: 1268px;
  height: 200px;
}
.wbody {
  flex: 1;
  background: #fff;
}
.tbar {
  flex: none;
  display: flex;
  align-items: center;
  height: 21px;
  margin-bottom: 1px;
  padding: 0 4px 0 2px;
  background: #21a995;
}
.ticon {
  flex: none;
  width: 14px;
  height: 13px;
}
.ttext {
  flex: 1;
  min-width: 0;
  overflow: hidden;
  margin-left: 10px;
  padding-top: 2px;
  font: 12px/21px "Liberation Mono", monospace;
  white-space: pre;
  color: #d6f0ea;
}
.tmax {
  flex: none;
  width: 14px;
  height: 14px;
}
.term {
  position: absolute;
  left: 10px;
  top: 1000px;
  width: 995px;
  height: 68px;
  box-sizing: border-box;
  padding: 19px 0 0 2px;
  background: #fff;
  border-right: 2px solid #6b7a88;
  border-bottom: 2px solid #a9b6c2;
  border-left: 2px solid #a9b6c2;
}
.termtxt {
  margin: 0 0 0 15px;
  font: 12px/16px "Liberation Mono", monospace;
  color: #000;
}
.cursor {
  width: 7px;
  height: 15px;
  margin-top: -2px;
  background: #000;
}
.wdate {
  left: 1617px;
  top: 1002px;
  width: 293px;
  height: 67px;
}
.datebody {
  flex: 1;
  display: flex;
  align-items: center;
  justify-content: center;
  background: #fff;
  font-size: 21.500px;
  color: #111;
}
.wclock {
  left: 1855px;
  top: 1px;
  width: 64px;
  height: 87px;
}
.wclock .ticon {
  margin-left: 2px;
}
.wclock .ttext {
  margin-left: 9px;
  font-size: 13px;
}
.clockbody {
  flex: 1;
  background: #fff;
  overflow: hidden;
}
.clockbody svg {
  display: block;
}
.writer {
  left: 8px;
  top: 28px;
  width: 1784px;
  height: 986px;
}
.writer .ttext {
  margin-left: 9px;
}
.menubar {
  flex: none;
  display: flex;
  align-items: center;
  position: relative;
  box-sizing: border-box;
  height: 34px;
  padding-left: 0;
  background: #e8e8e6;
}
.menubar::after {
  content: "";
  position: absolute;
  left: 0;
  bottom: 0;
  width: 1736px;
  height: 2px;
  background: #d6d6d4;
}
.mitem {
  padding: 0 10px;
  font-size: 16.500px;
  color: #333;
}
.mitem:first-child {
  margin-left: -2px;
}
.mclose {
  position: absolute;
  left: 1752px;
  top: 12px;
}
.toolbar {
  flex: none;
  display: flex;
  align-items: center;
  box-sizing: border-box;
  height: 47px;
  background: #e8e8e6;
}
.tb0 {
  padding-bottom: 2px;
}
.tb1 {
  padding-bottom: 1px;
}
.item {
  flex: none;
  display: flex;
  align-items: center;
  justify-content: center;
}
.ic {
  flex: none;
  width: 36px;
  height: 36px;
}
.k-sep {
  height: 34px;
  background: #d4d4d2;
}
.k-grip {
  height: 26px;
  background: repeating-linear-gradient(#a8a8a8 0 3px, #e8e8e6 3px 5px);
}
.k-alnl {
  box-sizing: border-box;
  height: 41px;
  background: #d9d9d7;
  border: 1px solid #bcbcba;
  border-radius: 3px;
}
.tri {
  display: block;
  width: 0;
  height: 0;
  border-top: 5px solid #111;
  border-left: 4px solid transparent;
  border-right: 4px solid transparent;
}
.tri.off {
  border-top-color: #b5b5b5;
}
.tri.big {
  border-top: 6px solid #333;
  border-left-width: 6px;
  border-right-width: 6px;
}
.combo {
  flex: 1;
  min-width: 0;
  display: flex;
  box-sizing: border-box;
  height: 40px;
  background: #fff;
  border: 1px solid #bdbdbb;
  border-radius: 3px;
}
.ctext {
  flex: 1;
  min-width: 0;
  overflow: hidden;
  margin: 0 10px 0 11px;
  font-size: 16.500px;
  line-height: 38px;
  white-space: nowrap;
  color: #333;
}
.k-combo:nth-child(2) .ctext {
  margin: 0 0 0 10px;
}
.cbtn {
  flex: none;
  display: flex;
  align-items: center;
  justify-content: center;
  background: linear-gradient(#e8e8e6, #c9c9c7);
  border-left: 1px solid #c4c4c2;
}
.workspace {
  flex: 1;
  min-height: 0;
  display: flex;
  background: #e8e8e6;
}
.edit {
  flex: none;
  width: 1710px;
  display: flex;
  flex-direction: column;
}
.rulerrow {
  flex: none;
  display: flex;
  box-sizing: border-box;
  height: 28px;
  padding-top: 5px;
}
.rcorner {
  flex: none;
  width: 68px;
}
.rcorner i {
  display: block;
  width: 7px;
  height: 6px;
  margin: 6px 0 0 8px;
  border-left: 2px solid #555;
  border-bottom: 2px solid #555;
  box-sizing: border-box;
}
.hruler {
  flex: none;
  display: block;
  overflow: hidden;
}
.rnum {
  font-size: 13px;
  font-family: "Open Sans", sans-serif;
  fill: #8c8c8c;
}
.docrow {
  flex: 1;
  min-height: 0;
  display: flex;
}
.vcol {
  flex: none;
  width: 68px;
  padding-left: 3px;
  box-sizing: border-box;
  overflow: hidden;
}
.vcol svg {
  display: block;
  margin-top: 1px;
}
.page {
  flex: 1;
  position: relative;
  min-width: 0;
  overflow: hidden;
  background: #fff;
  box-shadow: -2px 0 4px rgba(0, 0, 0, 0.3);
}
.mark {
  position: absolute;
  top: 4px;
  width: 28px;
  height: 28px;
  border-bottom: 1px solid #c8c8c8;
}
.mark.tl {
  left: 135px;
  border-right: 1px solid #c8c8c8;
}
.mark.tr {
  left: 1600px;
  border-left: 1px solid #c8c8c8;
}
.doc {
  padding: 33px 0 0 164.500px;
  font: 28.800px/32.710px "Liberation Mono", monospace;
  color: #000;
  white-space: pre;
}
.dline {
  height: 32.710px;
}
.hscroll {
  flex: none;
  position: relative;
  height: 14px;
  padding: 3px 0 0 3px;
  box-sizing: border-box;
  background: #c5c6c4;
}
.hthumb {
  width: 1551px;
  height: 8px;
  border-radius: 4px;
  background: #777a7a;
}
.vscroll {
  flex: none;
  position: relative;
  width: 14px;
  background: #c5c6c4;
}
.vthumb {
  position: absolute;
  left: 3px;
  top: 23px;
  width: 7px;
  height: 79px;
  border-radius: 3px;
  background: #808381;
}
.vcorner {
  position: absolute;
  left: 0;
  bottom: 0;
  width: 14px;
  height: 14px;
  background: #e2e2e0;
}
.sidegap {
  flex: none;
  position: relative;
  box-sizing: border-box;
  width: 8px;
  background: #e8e8e6;
  border-left: 1px solid #c8c8c6;
  border-right: 1px solid #c8c8c6;
  border-bottom: 1px solid #c8c8c6;
}
.sidegrip {
  position: absolute;
  left: 0;
  top: 358px;
  width: 7px;
  height: 87px;
  background: #6f7270;
}
.sidegrip::after {
  content: "";
  position: absolute;
  left: 2px;
  top: 40px;
  border-left: 4px solid #fff;
  border-top: 4px solid transparent;
  border-bottom: 4px solid transparent;
}
.sidebar {
  flex: 1;
  display: flex;
  flex-direction: column;
  align-items: center;
  border-top: 1px solid #c8c8c6;
  border-bottom: 1px solid #c8c8c6;
}
.menuic {
  margin-top: 13px;
}
.sidesep {
  width: 24px;
  height: 1px;
  margin: 13px 0 5px;
  background: #d4d4d2;
}
.sidebtn {
  box-sizing: border-box;
  width: 38px;
  height: 38px;
  margin-bottom: 3px;
  display: flex;
  align-items: center;
  justify-content: center;
  border: 1px solid #d0d0ce;
  border-radius: 4px;
}
.sideic {
  flex: none;
  display: block;
}
.pageic {
  margin-top: -3px;
}
.compass {
  margin-top: 2px;
}
.status {
  flex: none;
  display: flex;
  height: 28px;
  background: #e8e8e6;
}
.cell {
  flex: none;
  box-sizing: border-box;
  display: flex;
  align-items: center;
  height: 24px;
  margin-top: 2px;
  padding-left: 12px;
  border-right: 1px solid #333;
  font-size: 13.700px;
  color: #555;
  white-space: nowrap;
}
.cell svg {
  flex: none;
}
.c-first {
  padding-left: 11px;
}
.c-mid {
  justify-content: center;
  padding-left: 4px;
}
.c-sel,
.c-doc {
  padding-left: 11px;
}
.c-layout {
  padding-left: 8px;
}
.c-zoom {
  padding-left: 0;
}
.c-pct {
  border-right: 0;
  padding-left: 11px;
}
</style>
